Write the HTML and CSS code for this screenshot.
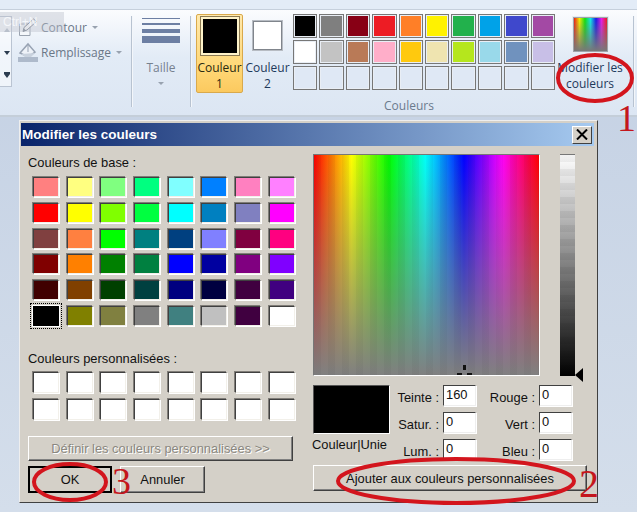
FILE: index.html
```html
<!DOCTYPE html>
<html lang="fr">
<head>
<meta charset="utf-8">
<title>Modifier les couleurs</title>
<link rel="stylesheet" href="styles.css">
</head>
<body>
<div class="page">
  <div class="topband"></div>
  <div class="ribbon">
    <div class="stub"><i class="up"></i><i class="down"></i><i class="more"></i></div>
    <div class="shape-opts">
      <div class="opt">
        <svg class="opt-icon" width="20" height="20" viewBox="0 0 20 20"><path d="M1.5 7 L12 7 L12 18.5 L1.5 18.5 Z" fill="#f4f7fb" stroke="#9aa3b0"/><path d="M5 14.5 L6 10.5 L15.5 2 L18.5 4.5 L9 13 Z" fill="#fff" stroke="#737c8a"/><path d="M5 14.5 L6 11.5 L8 13.5 Z" fill="#737c8a"/></svg>
        <span>Contour</span><b class="caret"></b>
      </div>
      <div class="opt">
        <svg class="opt-icon" width="20" height="20" viewBox="0 0 20 20"><path d="M2 11 L10 2 L17 10 L10 15 Z" fill="#eef2f8" stroke="#98a3b3" stroke-width="1.5"/><path d="M10 3 L10 10" stroke="#98a3b3"/><path d="M3 12 L17 11 L13 15 L7 15 Z" fill="#c9d2de"/><rect x="0" y="15" width="20" height="5" fill="#aebacb"/></svg>
        <span>Remplissage</span><b class="caret"></b>
      </div>
    </div>
    <div class="sep"></div>
    <div class="size">
      <div class="lines"><i class="l1"></i><i class="l2"></i><i class="l3"></i><i class="l4"></i></div>
      <span class="size-label">Taille</span>
      <b class="caret"></b>
    </div>
    <div class="sep"></div>
    <div class="colors">
      <div class="colors-top">
        <div class="col-btn active"><div class="chip-big"></div><span>Couleur<br>1</span></div>
        <div class="col-btn second"><div class="chip-white"></div><span>Couleur<br>2</span></div>
        <div class="palette">
          <i style="background:#000000"></i><i style="background:#7f7f7f"></i><i style="background:#880015"></i><i style="background:#ed1c24"></i><i style="background:#ff7f27"></i><i style="background:#fff200"></i><i style="background:#22b14c"></i><i style="background:#00a2e8"></i><i style="background:#3f48cc"></i><i style="background:#a349a4"></i>
          <i style="background:#ffffff"></i><i style="background:#c3c3c3"></i><i style="background:#b97a57"></i><i style="background:#ffaec9"></i><i style="background:#ffc90e"></i><i style="background:#efe4b0"></i><i style="background:#b5e61d"></i><i style="background:#99d9ea"></i><i style="background:#7092be"></i><i style="background:#c8bfe7"></i>
          <i></i><i></i><i></i><i></i><i></i><i></i><i></i><i></i><i></i><i></i>
        </div>
        <div class="edit">
          <div class="edit-chip"></div>
          <span>Modifier les<br>couleurs</span>
        </div>
      </div>
      <div class="group-label">Couleurs</div>
    </div>
    <div class="sep"></div>
  </div>
  <div class="ghost">Ctrl+N</div>

  <div class="dialog">
    <div class="titlebar"><span>Modifier les couleurs</span>
      <div class="close"><svg width="12" height="11" viewBox="0 0 12 11"><path d="M1 0.5 L11 10.5 M11 0.5 L1 10.5" stroke="#000" stroke-width="2"/></svg></div>
    </div>
    <div class="dlg-body">
      <div class="left">
        <div class="lbl">Couleurs de base :</div>
        <div class="swatches">
          <i style="background:#ff8080"></i><i style="background:#ffff80"></i><i style="background:#80ff80"></i><i style="background:#00ff80"></i><i style="background:#80ffff"></i><i style="background:#0080ff"></i><i style="background:#ff80c0"></i><i style="background:#ff80ff"></i>
          <i style="background:#ff0000"></i><i style="background:#ffff00"></i><i style="background:#80ff00"></i><i style="background:#00ff40"></i><i style="background:#00ffff"></i><i style="background:#0080c0"></i><i style="background:#8080c0"></i><i style="background:#ff00ff"></i>
          <i style="background:#804040"></i><i style="background:#ff8040"></i><i style="background:#00ff00"></i><i style="background:#008080"></i><i style="background:#004080"></i><i style="background:#8080ff"></i><i style="background:#800040"></i><i style="background:#ff0080"></i>
          <i style="background:#800000"></i><i style="background:#ff8000"></i><i style="background:#008000"></i><i style="background:#008040"></i><i style="background:#0000ff"></i><i style="background:#0000a0"></i><i style="background:#800080"></i><i style="background:#8000ff"></i>
          <i style="background:#400000"></i><i style="background:#804000"></i><i style="background:#004000"></i><i style="background:#004040"></i><i style="background:#000080"></i><i style="background:#000040"></i><i style="background:#400040"></i><i style="background:#400080"></i>
          <i class="selected" style="background:#000000"></i><i style="background:#808000"></i><i style="background:#808040"></i><i style="background:#808080"></i><i style="background:#408080"></i><i style="background:#c0c0c0"></i><i style="background:#400040"></i><i style="background:#ffffff"></i>
        </div>
        <div class="lbl lbl-custom">Couleurs personnalisées :</div>
        <div class="swatches custom">
          <i></i><i></i><i></i><i></i><i></i><i></i><i></i><i></i>
          <i></i><i></i><i></i><i></i><i></i><i></i><i></i><i></i>
        </div>
        <div class="btn define">Définir les couleurs personnalisées &gt;&gt;</div>
        <div class="btn-row">
          <div class="btn ok">OK</div>
          <div class="btn cancel">Annuler</div>
        </div>
      </div>
      <div class="right">
        <div class="picker-row">
          <div class="spectrum"><i class="cross"></i></div>
          <div class="lum"><i class="lum-arrow"></i></div>
        </div>
        <div class="values">
          <div class="preview-col">
            <div class="preview"></div>
            <div class="preview-label">Couleur|Unie</div>
          </div>
          <div class="fields">
            <label>Teinte :</label><div class="field">160</div><label>Rouge :</label><div class="field">0</div>
            <label>Satur. :</label><div class="field">0</div><label>Vert :</label><div class="field">0</div>
            <label>Lum. :</label><div class="field">0</div><label>Bleu :</label><div class="field">0</div>
          </div>
        </div>
        <div class="btn add">Ajouter aux couleurs personnalisées</div>
      </div>
    </div>
  </div>

  <svg class="marks" width="637" height="512" viewBox="0 0 637 512">
    <g fill="none" stroke="#d3151d" stroke-width="4">
      <ellipse cx="595" cy="78" rx="37" ry="23"/>
      <ellipse cx="456" cy="481" rx="118" ry="22"/>
      <ellipse cx="70" cy="482" rx="36" ry="18"/>
    </g>
    <g class="digits">
      <text x="617" y="131">1</text>
      <text class="digit-big" x="579" y="497">2</text>
      <text x="112" y="494">3</text>
    </g>
  </svg>
</div>
</body>
</html>
```
FILE: styles.css
```css
* { box-sizing: border-box; }
html, body { margin: 0; padding: 0; }
body { font-family: "Liberation Sans", Arial, sans-serif; }
.page {
  position: relative;
  width: 637px;
  height: 512px;
  overflow: hidden;
  background: linear-gradient(#c3d0e3, #d4deeb);
}
i { display: block; }

/* ribbon */
.topband { height: 10px; background: #e3ecf7; border-bottom: 1px solid #c6d0dc; }
.ribbon {
  display: flex;
  height: 107px;
  padding-top: 6px;
  padding-bottom: 8px;
  font-family: "Open Sans", "Noto Sans", sans-serif;
  font-size: 12px;
  color: #1e395b;
  background: linear-gradient(#fbfcfe, #e2ebf6 45%, #dce6f3);
  border-bottom: 2px solid #c4ced9;
}
.sep { width: 1px; background: #b8c3d1; flex: none; box-shadow: 1px 0 0 #f3f6fa; }
.ghost {
  position: absolute;
  left: 0;
  top: 12px;
  width: 64px;
  height: 20px;
  padding-left: 3px;
  font-size: 12px;
  line-height: 20px;
  color: #f4f6fa;
  background: rgba(190, 196, 206, .45);
}
.stub {
  width: 12px;
  height: 71px;
  border: 1px solid #bac4d2;
  border-left: 0;
  flex: none;
  display: flex;
  flex-direction: column;
  align-items: center;
  gap: 19px;
  padding: 11px 0 0 2px;
  background: rgba(255,255,255,.5);
}
.stub i { width: 0; height: 0; border-left: 3px solid transparent; border-right: 3px solid transparent; }
.stub .up { border-bottom: 4px solid #b4bdc9; }
.stub .down { border-top: 4px solid #2c3c50; }
.stub .more { border-top: 4px solid #2c3c50; box-shadow: 0 -2px 0 #2c3c50; }
.shape-opts {
  width: 113px;
  margin-left: 6px;
  flex: none;
  display: flex;
  flex-direction: column;
  gap: 5px;
  padding-top: 1px;
}
.opt { display: flex; align-items: center; height: 20px; color: #6a7787; white-space: nowrap; }
.opt span { margin-left: 3px; }
.opt-icon { flex: none; }
.caret {
  display: block;
  width: 0;
  height: 0;
  margin-left: 5px;
  border-left: 3px solid transparent;
  border-right: 3px solid transparent;
  border-top: 3px solid #98a2af;
}
.size { width: 58px; flex: none; display: flex; flex-direction: column; align-items: center; padding-top: 2px; color: #76818f; }
.lines { width: 38px; display: flex; flex-direction: column; gap: 3px; }
.lines i { background: #6d7fa3; }
.lines .l1 { height: 1px; }
.lines .l2 { height: 2px; margin-top: 1px; }
.lines .l3 { height: 4px; margin-top: 1px; }
.lines .l4 { height: 7px; }
.size-label { margin-top: 16px; line-height: 17px; }
.size .caret { margin: 6px 0 0; }
.colors { width: 442px; flex: none; display: flex; flex-direction: column; }
.colors-top { display: flex; padding-left: 5px; margin-top: -2px; }
.col-btn { width: 47px; height: 79px; flex: none; display: flex; flex-direction: column; align-items: center; text-align: center; line-height: 16px; color: #1e395b; white-space: nowrap; }
.col-btn.active {
  background: linear-gradient(#ffe9ad, #ffd775 70%, #fbc95f);
  border: 1px solid #d9a94c;
  border-radius: 2px;
  padding-top: 2px;
  color: #2a2a10;
}
.chip-big { width: 38px; height: 38px; background: #000; border: 2px solid #fff3c9; outline: 1px solid #8c7a52; }
.chip-white { width: 29px; height: 29px; background: #fff; border: 1px solid #80858c; margin-top: 7px; outline: 1px solid #b7bcc3; }
.col-btn.active span { margin-top: 5px; }
.col-btn.second { margin-left: 1px; }
.col-btn.second span { margin-top: 10px; }
.palette {
  width: 262px;
  margin-left: 2px;
  flex: none;
  display: grid;
  grid-template-columns: repeat(10, 1fr);
  grid-auto-rows: 24px;
  gap: 2px;
  align-self: flex-start;
}
.palette i { border: 1px solid #777; background-clip: padding-box; box-shadow: inset 0 0 0 1px #e9eef5; background-color: #dfe8f5; }
.edit { width: 70px; display: flex; flex-direction: column; align-items: center; flex: none; text-align: center; line-height: 16px; white-space: nowrap; color: #1e395b; }
.edit-chip {
  width: 35px;
  height: 35px;
  margin: 3px 0 0 1px;
  border: 1px solid #9ea4ab;
  outline: 1px solid #e8ecf1;
  background: linear-gradient(transparent, #787878), linear-gradient(to right, #f01818, #f4f000, #10e010, #10e8e8, #1818e8, #e818e8, #f01818);
}
.edit span { margin-top: 8px; }
.group-label { width: 262px; margin-left: 87px; margin-top: 5px; text-align: center; color: #6b7a8d; line-height: 16px; }

/* dialog */
.dialog {
  position: absolute;
  left: 19px;
  top: 120px;
  width: 579px;
  height: 383px;
  padding: 2px 3px 2px 1px;
  background: #d4d0c8;
  border: 1px solid;
  border-color: #eeeeee #404040 #404040 #eeeeee;
  font-size: 12.9px;
  color: #111;
}
.titlebar {
  height: 23px;
  display: flex;
  align-items: center;
  justify-content: space-between;
  padding: 0 2px 0 1px;
  background: linear-gradient(to right, #0a246a, #a6caf0);
  color: #fff;
  font-weight: bold;
  font-size: 13.5px;
}
.close {
  width: 20px;
  height: 18px;
  display: flex;
  align-items: center;
  justify-content: center;
  background: #d4d0c8;
  border: 1px solid;
  border-color: #fff #404040 #404040 #fff;
}
.dlg-body { display: flex; padding-left: 7px; }
.left { width: 265px; flex: none; }
.lbl { line-height: 16px; margin-top: 9px; white-space: nowrap; }
.lbl-custom { margin-top: 25px; }
.swatches {
  margin: 6px 0 0 5px;
  width: 262px;
  display: grid;
  grid-template-columns: repeat(8, 26px);
  grid-auto-rows: 20px;
  column-gap: 7.7px;
  row-gap: 5.8px;
}
.lbl-custom + .swatches { margin-top: 5px; }
.swatches i {
  border: 1px solid;
  border-color: #404040 #f2f0ea #f2f0ea #404040;
  box-shadow: -1px -1px 0 #807d78, 1px 1px 0 #fff;
}
.swatches i.selected {
  border: 2px solid #000;
  box-shadow: 0 0 0 1px #fff;
  outline: 1px dotted #000;
  outline-offset: 2px;
}
.custom { row-gap: 6px; grid-auto-rows: 21px; }
.custom i { background: #fff; }
.btn {
  display: flex;
  align-items: center;
  justify-content: center;
  background: #d4d0c8;
  border: 1px solid;
  border-color: #fff #404040 #404040 #fff;
  box-shadow: inset -1px -1px 0 #808080;
  white-space: nowrap;
}
.define { width: 265px; height: 25px; margin-top: 16px; color: #8a8780; text-shadow: 1px 1px 0 #fff; }
.btn-row { display: flex; gap: 8px; margin-top: 5px; }
.ok { width: 84px; height: 27px; border: 2px solid #000; box-shadow: none; }
.cancel { width: 85px; height: 27px; }
.right { margin-left: 20px; width: 274px; flex: none; padding-top: 8px; }
.picker-row { display: flex; gap: 20px; position: relative; }
.spectrum {
  position: relative;
  width: 227px;
  height: 222px;
  border: 1px solid;
  border-color: #777 #fff #fff #777;
  background:
    repeating-linear-gradient(to right, rgba(0,0,0,.035) 0 7px, transparent 7px 14px),
    linear-gradient(transparent, #808080),
    linear-gradient(to right, #ff0000, #ffff00, #00ff00, #00ffff, #0000ff, #ff00ff, #ff0000);
}
.cross {
  position: absolute;
  left: 143px;
  bottom: 0;
  width: 15px;
  height: 10px;
  background:
    linear-gradient(#111, #111) 6px 0 / 3px 5px no-repeat,
    linear-gradient(#111, #111) 0 8px / 5px 2px no-repeat,
    linear-gradient(#111, #111) 10px 8px / 5px 2px no-repeat;
}
.lum {
  position: relative;
  width: 15px;
  height: 222px;
  border-top: 1px solid #777;
  background:
    repeating-linear-gradient(rgba(0,0,0,.05) 0 7px, transparent 7px 14px),
    linear-gradient(#fff, #808080 50%, #000);
}
.lum-arrow {
  position: absolute;
  left: 15px;
  bottom: -6px;
  width: 0;
  height: 0;
  border-top: 7px solid transparent;
  border-bottom: 7px solid transparent;
  border-right: 8px solid #000;
}
.values { display: flex; margin-top: 9px; }
.preview-col { width: 77px; flex: none; }
.preview { height: 49px; background: #000; border: 1px solid; border-color: #555 #fff #fff #555; }
.preview-label { margin-top: 3px; margin-left: -1px; line-height: 16px; white-space: nowrap; }
.fields {
  display: grid;
  grid-template-columns: 49px 33px 55px 33px;
  grid-auto-rows: 21px;
  column-gap: 4px;
  row-gap: 6px;
}
.fields label { display: flex; align-items: center; justify-content: flex-end; padding-top: 3px; white-space: nowrap; }
.field {
  background: #fff;
  border: 1px solid;
  border-color: #404040 #eee #eee #404040;
  box-shadow: 1px 1px 0 #fff;
  padding-left: 2px;
  line-height: 18px;
}
.add { width: 274px; height: 26px; margin-top: 5px; }

/* annotations */
.marks { position: absolute; left: 0; top: 0; pointer-events: none; }
.digits { font-family: "Liberation Serif", serif; font-size: 38px; fill: #c4161c; }
.digit-big { font-size: 40px; }
```
